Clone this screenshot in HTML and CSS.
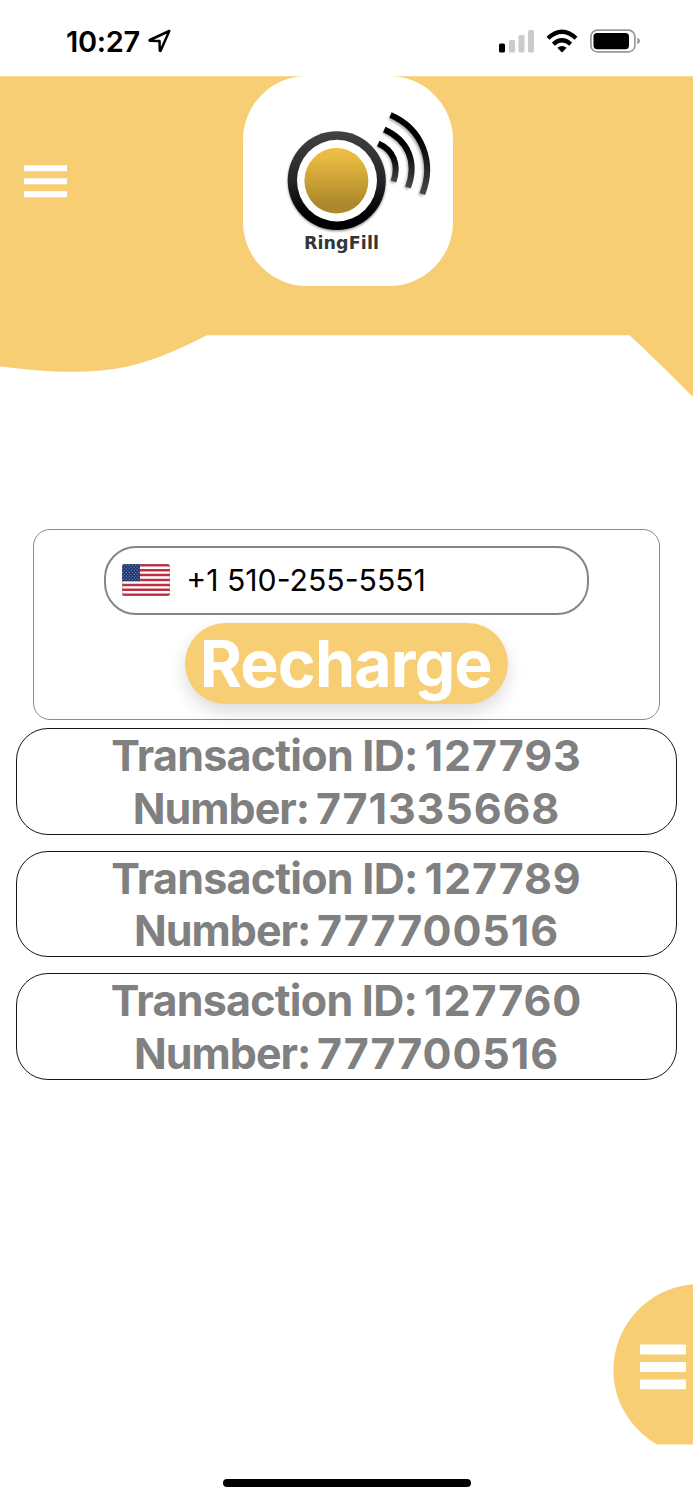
FILE: index.html
```html
<!DOCTYPE html>
<html lang="en">
<head>
<meta charset="utf-8">
<title>RingFill</title>
<link rel="stylesheet" href="styles.css">
</head>
<body>
<div class="screen">
  <div class="status-bar">
    <span class="clock">10:27</span>
    <svg class="location" width="26" height="26" viewBox="0 0 26 26"><path d="M22.300 4 L2.800 13 Q2.200 13.500 3 13.700 L12.500 14 L12.800 23.500 Q13.100 24.500 13.700 23.600 Z" fill="none" stroke="#000" stroke-width="2.500" stroke-linejoin="round"/></svg>
    <svg class="signals" width="144" height="30" viewBox="0 0 144 30">
      <rect x="1" y="16.500" width="6" height="9" rx="1.600"/>
      <g fill="#cbcbcb"><rect x="11" y="13" width="6" height="12.500" rx="1.600"/><rect x="20.500" y="8" width="6" height="17.500" rx="1.600"/><rect x="30" y="3" width="6" height="22.500" rx="1.600"/></g>
      <g fill="none" stroke="#000" stroke-width="4.200"><path d="M50 11.300 Q64 -1.900 78 11.300"/><path d="M55.300 17.100 Q64 9.500 72.700 17.100"/></g>
      <path d="M59.400 20.700 Q64 17.300 68.600 20.700 L64.600 25 Q64 25.600 63.400 25Z"/>
      <rect x="92.900" y="3.200" width="44" height="21.700" rx="6.500" fill="none" stroke="#999" stroke-width="1.700"/>
      <rect x="95.500" y="5.900" width="35.500" height="16.300" rx="3.600"/>
      <path d="M139.300 10.500 Q142 11.700 142 14 Q142 16.300 139.300 17.500Z" fill="#999"/>
    </svg>
  </div>

  <header class="header">
    <svg class="wave" width="693" height="324" viewBox="0 0 693 324"><path d="M0 0.300 H693 V321 C674 302 651 279 629.500 259.300 H207 C183 271 160 283 130 290 C89 299 47 296.500 0 290.200 Z" fill="#f7ce73"/></svg>
    <svg class="menu" width="43" height="33" viewBox="0 0 43 33"><path d="M0 3.200H43M0 16.300H43M0 29.300H43" stroke="#fff" stroke-width="6"/></svg>
    <div class="logo">
      <svg width="210" height="210" viewBox="0 0 210 210">
        <defs>
          <linearGradient id="ring" x1="0" y1="0" x2="0" y2="1"><stop offset="0" stop-color="#424244"/><stop offset=".5" stop-color="#242527"/><stop offset=".85" stop-color="#000"/></linearGradient>
          <linearGradient id="gold" x1="0" y1="0" x2="0" y2="1"><stop offset="0" stop-color="#efbd45"/><stop offset=".15" stop-color="#e8ba42"/><stop offset=".85" stop-color="#ad882b"/></linearGradient>
          <linearGradient id="wave-ink" x1="0" y1="0" x2="0" y2="1"><stop offset=".3" stop-color="#000"/><stop offset="1" stop-color="#48484a"/></linearGradient>
          <filter id="soft" x="-20%" y="-20%" width="140%" height="140%"><feGaussianBlur stdDeviation=".8"/></filter>
        </defs>
        <g fill="none" stroke="#777" stroke-width="4.500" filter="url(#soft)" opacity=".6">
          <path d="M134.500 69.500 C148 76 154.500 88 149 107"/><path d="M140.500 55.500 C164 67 172 87 163.300 113"/><path d="M146.500 41.500 C178 56 189 89 177.500 119.500"/>
        </g>
        <g fill="none" stroke="url(#wave-ink)" stroke-width="6">
          <path d="M135.300 67.500 C150 74 156.500 88 150.500 105.500"/><path d="M141.300 53.500 C165 64 174.500 86 165 111.500"/><path d="M147.500 39 C180 53 191.500 87 179.300 118"/>
        </g>
        <circle cx="93.800" cy="106" r="44.500" fill="none" stroke="#888" stroke-width="9" filter="url(#soft)"/>
        <ellipse cx="93.700" cy="104.600" rx="49" ry="49.300" fill="url(#ring)"/>
        <ellipse cx="94" cy="104.600" rx="40" ry="40.800" fill="#fff"/>
        <ellipse cx="93.400" cy="104.800" rx="32" ry="32.700" fill="url(#gold)"/>
      </svg>
      <span class="brand">RingFill</span>
    </div>
  </header>

  <main class="content">
    <section class="recharge-card">
      <div class="phone-field">
        <svg class="flag" width="48" height="32" viewBox="0 0 48 32">
          <defs>
            <clipPath id="flag-clip"><rect width="48" height="32" rx="2.500"/></clipPath>
            <pattern id="stars" width="3.200" height="3.600" patternUnits="userSpaceOnUse"><circle cx=".9" cy="1.100" r=".5" fill="#fff"/><circle cx="2.500" cy="2.900" r=".5" fill="#fff"/></pattern>
          </defs>
          <g clip-path="url(#flag-clip)">
            <rect width="48" height="32" fill="#fff"/>
            <path d="M0 1.230H48M0 6.150H48M0 11.080H48M0 16H48M0 20.920H48M0 25.850H48M0 30.770H48" stroke="#bd3044" stroke-width="2.460"/>
            <rect width="18" height="17.200" fill="#142f6c"/><rect width="18" height="17.200" fill="url(#stars)"/>
          </g>
          <rect x=".3" y=".3" width="47.400" height="31.400" rx="2.400" fill="none" stroke="#888" stroke-opacity=".5" stroke-width=".7"/>
        </svg>
        <span class="phone">+1 510-255-5551</span>
      </div>
      <button class="recharge">Recharge</button>
    </section>
    <section class="transactions">
      <article class="transaction"><div class="tid">Transaction ID: <span class="value">127793</span></div><div class="num">Number: <span class="value">771335668</span></div></article>
      <article class="transaction"><div class="tid">Transaction ID: <span class="value">127789</span></div><div class="num">Number: <span class="value">777700516</span></div></article>
      <article class="transaction"><div class="tid">Transaction ID: <span class="value">127760</span></div><div class="num">Number: <span class="value">777700516</span></div></article>
    </section>
  </main>

  <footer class="footer">
    <svg class="fab" width="80" height="161" viewBox="0 0 80 161"><path d="M80 0.200 A86.300 86.300 0 0 0 .4 86.300 C.4 117 17 144.500 44 160.500 H80Z" fill="#f7ce73"/><g fill="#fff"><rect x="27" y="60.500" width="46" height="10" rx="1"/><rect x="27" y="78" width="46" height="10" rx="1"/><rect x="27" y="95.500" width="46" height="9.800" rx="1"/></g></svg>
    <div class="home-indicator"></div>
  </footer>
</div>
</body>
</html>
```

FILE: styles.css
```css
* { box-sizing: border-box; }
body { margin: 0; background: #fff; font-family: Inter, "Liberation Sans", sans-serif; }
svg { display: block; flex: none; }
.screen { width: 693px; height: 1500px; overflow: hidden; display: flex; flex-direction: column; background: #fff; }

.status-bar { height: 76px; flex: none; display: flex; align-items: flex-start; padding: 27px 51px 0 66px; }
.clock { width: 74px; font-size: 29px; line-height: 29px; font-weight: 600; white-space: nowrap; letter-spacing: -0.3px; }
.location { margin: 0 0 0 7px; }
.signals { margin-left: auto; }

.header { height: 324px; flex: none; display: grid; grid-template-columns: 243.400px 210px 1fr; align-items: start; }
.wave { grid-area: 1 / 1 / 2 / 4; }
.menu { grid-area: 1 / 1; margin: 89px 0 0 24px; }
.logo { grid-area: 1 / 2; display: grid; height: 210px; border-radius: 64px; background: #fff; }
.logo > * { grid-area: 1 / 1; }
.brand { margin: 157px 0 0 60.500px; font-family: "DejaVu Sans", sans-serif; font-weight: 700; font-size: 17.500px; line-height: 20px; letter-spacing: 0.1px; color: #333539; white-space: nowrap; }

.content { flex: none; padding: 129px 16px 0; }
.recharge-card { height: 191px; margin: 0 17px; border: 1.200px solid #8b8b8b; border-radius: 17px; padding-top: 16px; display: flex; flex-direction: column; align-items: center; }
.phone-field { width: 485.500px; height: 68.500px; flex: none; border: 2px solid #858585; border-radius: 32px; display: flex; align-items: center; padding-left: 16px; }
.phone { margin-left: 16.500px; font-size: 30.200px; white-space: nowrap; }
.recharge { width: 323.500px; height: 80.500px; flex: none; margin-top: 8.500px; padding: 1px 1.500px 0 0; border: 0; border-radius: 41px; background: #f7ce73; color: #fff; font-family: inherit; font-size: 64.500px; line-height: 80px; font-weight: 700; letter-spacing: -0.9px; box-shadow: 0 8px 18px rgba(0, 0, 0, .14); }
.transactions { margin-top: 8px; display: flex; flex-direction: column; gap: 16px; }
.transaction { height: 106.500px; border: 1.300px solid #161616; border-radius: 32px; color: #7f807f; font-size: 43px; line-height: 52.500px; font-weight: 700; text-align: center; white-space: nowrap; }
.tid { letter-spacing: -0.750px; }
.num { letter-spacing: -1px; }
.value { margin-left: -2.500px; letter-spacing: 0.900px; }

.footer { margin-top: auto; display: flex; flex-direction: column; align-items: center; padding-bottom: 13px; }
.fab { align-self: flex-end; }
.home-indicator { width: 248px; height: 8px; margin-top: 34px; border-radius: 4px; background: #000; }
```
